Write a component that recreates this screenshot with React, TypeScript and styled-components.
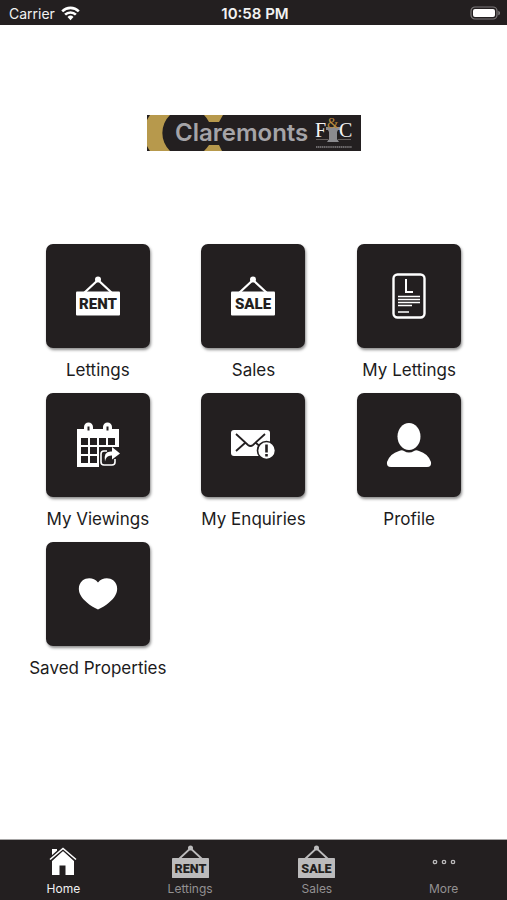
import React from "react";
import styled, { createGlobalStyle } from "styled-components";

const INK = "#231f20";

const GlobalStyle = createGlobalStyle`
  *, *::before, *::after { box-sizing: border-box; }
  body { margin: 0; background: #fff; font-family: Inter, sans-serif; color: #1c1b1c; }
`;

const Screen = styled.div`
  min-height: 100vh;
  display: flex;
  flex-direction: column;
`;

const StatusBar = styled.header`
  display: grid;
  grid-template-columns: 1fr auto 1fr;
  align-items: center;
  height: 25px;
  padding: 2px 6px 0 9px;
  background: ${INK};
  color: #f2f2f2;
  font-size: 14px;
  line-height: 20px;
`;

const Carrier = styled.span`
  display: flex;
  align-items: center;
  gap: 6px;
`;

const Clock = styled.time`
  font-size: 15px;
  font-weight: 600;
`;

const BatterySlot = styled.span`
  display: flex;
  justify-content: flex-end;
`;

const Main = styled.main`
  flex: 1;
  display: flex;
  flex-direction: column;
  align-items: center;
  padding: 90px 20px 40px;
  gap: 93px;
`;

const TileGrid = styled.ul`
  width: 100%;
  margin: 0;
  padding: 0;
  list-style: none;
  display: grid;
  grid-template-columns: repeat(3, 1fr);
  row-gap: 13px;
`;

const TileItem = styled.li`
  display: flex;
  justify-content: center;
`;

const TileLink = styled.a`
  display: flex;
  flex-direction: column;
  align-items: center;
  gap: 12px;
  color: inherit;
  text-decoration: none;
  font-size: 17px;
  line-height: 20px;
  white-space: nowrap;
`;

const TileFace = styled.span`
  display: flex;
  align-items: center;
  justify-content: center;
  width: 104px;
  height: 104px;
  border-radius: 7px;
  background: ${INK};
  color: #fff;
  box-shadow: 1px 2px 3px rgba(0, 0, 0, 0.45);
`;

const TabBar = styled.nav`
  display: grid;
  grid-template-columns: repeat(4, 1fr);
  height: 61px;
  border-top: 1px solid #a6a5a5;
  background: ${INK};
`;

const Tab = styled.a<{ $active?: boolean }>`
  display: flex;
  flex-direction: column;
  align-items: center;
  padding-top: 5px;
  gap: 3px;
  color: ${(p) => (p.$active ? "#fff" : "#bcbbbc")};
  text-decoration: none;
`;

const TabIcon = styled.span`
  display: flex;
  align-items: center;
  justify-content: center;
  height: 33px;
`;

const TabLabel = styled.span<{ $active?: boolean }>`
  color: ${(p) => (p.$active ? "#f0f0f0" : "#939192")};
  font-size: 12px;
  line-height: 16px;
`;

const Wifi = () => (
  <svg width="19" height="15" viewBox="0 0 19 15" fill="none" stroke="#fff" strokeWidth="2.6" aria-hidden="true">
    <path d="M1.2 5.3a11.8 11.8 0 0 1 16.6 0" />
    <path d="M4.1 8.7a7.6 7.6 0 0 1 10.8 0" />
    <path d="M9.5 14.2l-3-3.3a4.3 4.3 0 0 1 6 0z" fill="#fff" stroke="none" />
  </svg>
);

const Battery = () => (
  <svg width="31" height="15" viewBox="0 0 31 15" aria-hidden="true">
    <rect x="1" y="1" width="26" height="12" rx="4" fill="none" stroke="#7c797a" strokeWidth="1.2" />
    <rect x="3" y="3" width="22" height="8" rx="2" fill="#fff" />
    <path d="M28.4 4.7c2 .8 2 3.8 0 4.6z" fill="#8d8b8c" />
  </svg>
);

const Logo = () => (
  <svg width="214" height="36" viewBox="0 0 214 36" role="img" aria-label="Claremonts F&C">
    <rect width="214" height="36" fill={INK} />
    <g fill="#b7994c">
      <path d="M3 0H23A25 25 0 0 0 23 36H3A41 41 0 0 1 0 31V5A41 41 0 0 1 3 0z" />
      <path d="M57 0H76L72 7H62Q60 3 57 0z" />
      <path d="M57 36H75L72 30H62Q60 33 57 36z" />
    </g>
    <text x="28" y="26" fill="#a5a4a8" fontFamily="Inter, sans-serif" fontWeight="600" fontSize="24">Claremonts</text>
    <g fill="#8b8b8f">
      <path d="M179 12h14v3h-2l-1 2h-8l-1-2h-2z" />
      <path d="M182 17h8v7l2 3h-12l2-3z" />
    </g>
    <g fontFamily="Liberation Serif, serif">
      <text x="168" y="22" fill="#f4f4f4" fontSize="20">F</text>
      <text x="192" y="22" fill="#f4f4f4" fontSize="20">C</text>
      <text x="180" y="13" fill="#b98a3c" fontSize="15">&amp;</text>
    </g>
    <path d="M169 24.5h12M191 24.5h13" stroke="#77716f" strokeWidth="0.8" />
    <path d="M169 32h36" stroke="#858284" strokeWidth="1.6" strokeDasharray="1.4 .5" />
  </svg>
);

const Sign = ({ word, width = 44 }: { word: string; width?: number }) => (
  <svg width={width} height={(width * 40) / 44} viewBox="0 0 44 40" aria-hidden="true">
    <path d="M8 17L22 4l14 13" fill="none" stroke="currentColor" strokeWidth="2.2" />
    <circle cx="22" cy="3.5" r="3" fill="currentColor" />
    <rect y="15.5" width="44" height="24" rx="1" fill="currentColor" />
    <text x="22" y="33" textAnchor="middle" fill={INK} fontFamily="Roboto, sans-serif" fontWeight="900" fontSize="15">
      {word}
    </text>
  </svg>
);

const DocumentIcon = () => (
  <svg width="34" height="46" viewBox="0 0 34 46" fill="none" stroke="#fff" aria-hidden="true">
    <rect x="1.5" y="1.5" width="31" height="43" rx="4" strokeWidth="2.4" />
    <path d="M14 6v13h7" strokeWidth="2" />
    <path d="M6 23.5h22M6 26.5h22M6 29.5h22M6 32.5h14M6 39h11" strokeWidth="1.7" />
  </svg>
);

const CalendarIcon = () => (
  <svg width="44" height="46" viewBox="0 0 44 46" aria-hidden="true">
    <rect x="1" y="7" width="42" height="38" fill="#fff" />
    <path d="M9 11V5a3.5 3.5 0 0 1 7 0v6zM28 11V5a3.5 3.5 0 0 1 7 0v6z" fill="#fff" stroke="#fff" strokeWidth="2" />
    <path d="M12.5 4.5v4M31.5 4.5v4" stroke={INK} strokeWidth="2" />
    <g fill={INK}>
      <path d="M5 16h7v7H5zM14 16h7v7h-7zM23 16h7v7h-7zM32 16h7v7h-7zM5 25h7v7H5zM14 25h7v7h-7zM5 34h7v7H5zM14 34h7v7h-7z" />
      <path d="M23 25h21v21H23z" />
    </g>
    <path d="M31 29h-3q-3 0-3 3v8q0 3 3 3h8q3 0 3-3v-3" fill="none" stroke="#fff" strokeWidth="1.6" />
    <path d="M36 25l8 6.500-8 6v-4q-6-.5-7 6-2-11 7-10z" fill="#fff" />
  </svg>
);

const MailIcon = () => (
  <svg width="46" height="30" viewBox="0 0 46 30" fill="none" aria-hidden="true">
    <rect x="1" y="0" width="39" height="26" rx="3" fill="#fff" />
    <path d="M6 4l12 11q2.500 2 5 0L35 4M6 21l9-8M26 13l7 6" stroke={INK} strokeWidth="1.8" />
    <circle cx="36.5" cy="20.5" r="9" fill="#fff" stroke={INK} strokeWidth="1.6" />
    <path d="M36.5 14.5v8M36.5 24v2.400" stroke={INK} strokeWidth="2.6" />
  </svg>
);

const PersonIcon = () => (
  <svg width="46" height="46" viewBox="0 0 46 46" fill="#fff" aria-hidden="true">
    <ellipse cx="23" cy="14.5" rx="11.5" ry="13.5" />
    <path d="M13 29q3-1.500 5 0 5 3 10 0 2-1.500 5 0 9 2.500 12 11 .8 5-4 5H5q-4.800 0-4-5 3-8.500 12-11z" />
  </svg>
);

const HeartIcon = () => (
  <svg width="40" height="32" viewBox="0 0 40 32" fill="#fff" aria-hidden="true">
    <path d="M20 4.500C16-.5 9-.8 4.500 2.500.5 5.800-.3 12 2.500 17 5 22 12 28 20 31.500 28 28 35 22 37.500 17c2.800-5 2-11.200-2-14.500C31-.8 24-.5 20 4.500z" />
  </svg>
);

const HomeIcon = () => (
  <svg width="28" height="29" viewBox="0 0 28 29" aria-hidden="true">
    <path d="M3 2h5v4l-5 5z" fill="#fff" />
    <path d="M3 14L14 4l11 10v14h-8.500V18.500h-6V28H3z" fill="#fff" />
    <path d="M1 12.500L14 1l13 11.500" fill="none" stroke={INK} strokeWidth="4" />
    <path d="M1 12.500L14 1.500l13 11" fill="none" stroke="#fff" strokeWidth="1.6" />
  </svg>
);

const MoreIcon = () => (
  <svg width="26" height="30" viewBox="0 0 26 30" fill="none" stroke="currentColor" strokeWidth="1.3" aria-hidden="true">
    <circle cx="4" cy="15" r="1.7" />
    <circle cx="13" cy="15" r="1.7" />
    <circle cx="22" cy="15" r="1.7" />
  </svg>
);

const tiles = [
  { label: "Lettings", icon: <Sign word="RENT" /> },
  { label: "Sales", icon: <Sign word="SALE" /> },
  { label: "My Lettings", icon: <DocumentIcon /> },
  { label: "My Viewings", icon: <CalendarIcon /> },
  { label: "My Enquiries", icon: <MailIcon /> },
  { label: "Profile", icon: <PersonIcon /> },
  { label: "Saved Properties", icon: <HeartIcon /> },
];

const tabs = [
  { label: "Home", icon: <HomeIcon />, active: true },
  { label: "Lettings", icon: <Sign word="RENT" width={37} /> },
  { label: "Sales", icon: <Sign word="SALE" width={37} /> },
  { label: "More", icon: <MoreIcon /> },
];

export default function App() {
  return (
    <Screen>
      <GlobalStyle />
      <StatusBar>
        <Carrier>
          Carrier <Wifi />
        </Carrier>
        <Clock>10:58 PM</Clock>
        <BatterySlot>
          <Battery />
        </BatterySlot>
      </StatusBar>
      <Main>
        <Logo />
        <TileGrid>
          {tiles.map((t) => (
            <TileItem key={t.label}>
              <TileLink href="#">
                <TileFace>{t.icon}</TileFace>
                {t.label}
              </TileLink>
            </TileItem>
          ))}
        </TileGrid>
      </Main>
      <TabBar>
        {tabs.map((t) => (
          <Tab key={t.label} href="#" $active={t.active} aria-current={t.active ? "page" : undefined}>
            <TabIcon>{t.icon}</TabIcon>
            <TabLabel $active={t.active}>{t.label}</TabLabel>
          </Tab>
        ))}
      </TabBar>
    </Screen>
  );
}
